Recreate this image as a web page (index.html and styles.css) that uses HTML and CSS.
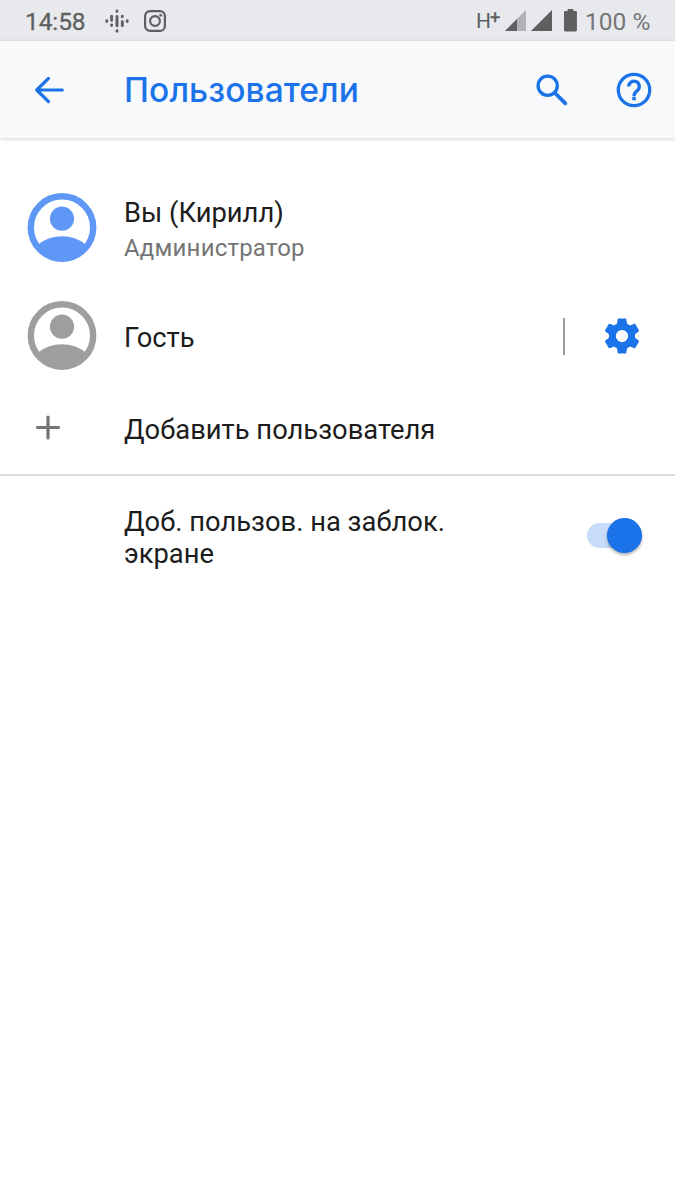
FILE: index.html
```html
<!DOCTYPE html>
<html lang="ru">
<head>
<meta charset="utf-8">
<title>Пользователи</title>
<link rel="stylesheet" href="styles.css">
</head>
<body>
<div class="status">
  <span class="clock">14:58</span>
  <svg class="podcast" width="26" height="26" viewBox="0 0 26 26" fill="none" stroke="#5e5f61" stroke-width="2.9" stroke-linecap="round"><path d="M2.8 12.7v.8M7.6 8.2v4.2M7.6 17v.6M13 2.900v.5M13 8.400v9.400M13 22.800v.5M18.300 8.200v.6M18.300 13.600v4.200M23.200 12.700v.8"/></svg>
  <svg class="insta" width="22" height="22" viewBox="0 0 22 22" fill="none" stroke="#5e5f61" stroke-width="2.2"><rect x="1.100" y="1.100" width="19.800" height="19.800" rx="5"/><circle cx="11" cy="11" r="4.900"/><circle cx="16.700" cy="5.300" r="1.400" fill="#5e5f61" stroke="none"/></svg>
  <span class="spacer"></span>
  <span class="net">H<span class="net-plus">+</span></span>
  <svg class="signal" width="22" height="22" viewBox="0 0 22 22"><path fill="#b1b2b5" d="M21 0v21H0z"/><path fill="#5e5f61" d="M12 9v12H0z"/></svg>
  <svg class="signal second" width="22" height="22" viewBox="0 0 22 22"><path fill="#5e5f61" d="M21 0v21H0z"/></svg>
  <svg class="battery" width="13" height="23" viewBox="0 0 13 23"><path fill="#5e5f61" d="M3.600 0h5.800v2.100h2.200c.8 0 1.300.5 1.300 1.300v17.700c0 .8-.5 1.300-1.300 1.300H1.300C.5 22.400 0 21.900 0 21.100V3.400c0-.8.5-1.300 1.300-1.300h2.300z"/></svg>
  <span class="percent">100 %</span>
</div>
<header class="bar">
  <svg class="back" width="32" height="30" viewBox="0 0 32 30" fill="none" stroke="#1a73e8" stroke-width="3.200" stroke-linecap="round" stroke-linejoin="round"><path d="M29.300 15H4M15.500 3.400L3.700 15l11.800 11.600"/></svg>
  <h1 class="title">Пользователи</h1>
  <svg class="search" width="34" height="34" viewBox="0 0 34 34" fill="none" stroke="#1a73e8" stroke-width="3.300" stroke-linecap="round"><circle cx="12.700" cy="12.700" r="9.600"/><path d="M20.500 20.500l9.800 9.800" stroke-width="3.800"/></svg>
  <svg class="help" width="36" height="36" viewBox="0 0 36 36" fill="none" stroke="#1a73e8" stroke-width="3.300"><circle cx="18" cy="18" r="15.700"/><path d="M12.700 14.400a5.300 5.300 0 1 1 9.100 3.700C19.800 20 18 20.600 18 24.200"/><path d="M16.300 26.600h3.500" stroke-width="3.400"/></svg>
</header>
<main>
  <section class="row user">
    <svg class="avatar you" width="70" height="70" viewBox="0 0 70 70"><circle cx="35" cy="34.500" r="31.200" fill="#fff" stroke="currentColor" stroke-width="6.400"/><circle cx="35" cy="25.700" r="12.100" fill="currentColor"/><path fill="currentColor" d="M12 51C18 46 26 43.200 35 43.200S52 46 58 51A29 29 0 0 1 35 66.500A29 29 0 0 1 12 51z"/></svg>
    <div class="labels"><div class="name">Вы (Кирилл)</div><div class="role">Администратор</div></div>
  </section>
  <section class="row guest">
    <svg class="avatar" width="70" height="70" viewBox="0 0 70 70"><circle cx="35" cy="34.500" r="31.200" fill="#fff" stroke="currentColor" stroke-width="6.400"/><circle cx="35" cy="25.700" r="12.100" fill="currentColor"/><path fill="currentColor" d="M12 51C18 46 26 43.200 35 43.200S52 46 58 51A29 29 0 0 1 35 66.500A29 29 0 0 1 12 51z"/></svg>
    <div class="name guest-name">Гость</div>
    <span class="separator"></span>
    <svg class="gear" width="42" height="42" viewBox="0 0 24 24"><path fill="#1a73e8" d="M19.430 12.980c.04-.32.07-.64.07-.98s-.03-.66-.07-.98l2.110-1.650c.19-.15.24-.42.12-.64l-2-3.460c-.12-.22-.39-.3-.61-.22l-2.490 1c-.52-.4-1.080-.73-1.690-.98l-.38-2.650C14.460 2.180 14.250 2 14 2h-4c-.25 0-.46.18-.49.42l-.38 2.650c-.61.25-1.170.59-1.690.98l-2.490-1c-.23-.09-.49 0-.61.22l-2 3.460c-.13.22-.07.49.12.64l2.110 1.650c-.04.32-.07.65-.07.98s.03.66.07.98l-2.110 1.650c-.19.15-.24.42-.12.64l2 3.460c.12.22.39.3.61.22l2.490-1c.52.4 1.080.73 1.690.98l.38 2.650c.03.24.24.42.49.42h4c.25 0 .46-.18.49-.42l.38-2.650c.61-.25 1.170-.59 1.690-.98l2.490 1c.23.09.49 0 .61-.22l2-3.460c.12-.22.07-.49-.12-.64z"/><circle cx="12" cy="12" r="3.500" fill="#fff"/></svg>
  </section>
  <section class="row add">
    <svg class="plus" width="26" height="26" viewBox="0 0 26 26" stroke="#757575" stroke-width="3.200" stroke-linecap="round"><path d="M13 2v21M2.500 12.500h21"/></svg>
    <div class="name">Добавить пользователя</div>
  </section>
  <section class="row lock">
    <div class="name">Доб. пользов. на заблок. экране</div>
    <div class="switch"><span class="knob"></span></div>
  </section>
</main>
</body>
</html>
```
FILE: styles.css
```css
* { box-sizing: border-box; }
body {
  margin: 0;
  width: 675px;
  height: 1200px;
  overflow: hidden;
  background: #fff;
  font-family: Roboto, "Liberation Sans", sans-serif;
  color: #1c1c1c;
}
svg { display: block; flex: none; }
.status {
  height: 41px;
  background: #e8e9ec;
  display: flex;
  align-items: center;
  padding: 0 25px 0 25px;
  color: #5e5f61;
  white-space: nowrap;
}
.clock { width: 78px; padding-top: 2px; font-size: 24.500px; letter-spacing: -.1px; -webkit-text-stroke: .3px; }
.podcast { margin-left: .5px; }
.insta { margin-left: 14.500px; }
.spacer { flex: 1; }
.net { display: flex; font-size: 21px; line-height: 26px; width: 29px; }
.net-plus { font-size: 18px; line-height: 20px; margin-left: -1px; -webkit-text-stroke: .5px; }
.signal { margin-top: 1px; }
.second { margin-left: 4px; }
.battery { margin-left: 11px; }
.percent { color: #757678; width: 65px; margin-left: 8px; padding-top: 2px; font-size: 24.500px; }
.bar {
  position: relative;
  height: 97px;
  background: #f8f9fb;
  display: flex;
  align-items: center;
  padding: 0 23px 0 33px;
  box-shadow: 0 1px 4px rgba(0,0,0,.18);
}
.title {
  margin: 0 0 0 59px;
  flex: 1;
  font: 500 33.500px/42px Inter, Roboto, sans-serif;
  letter-spacing: .1px;
  color: #1a73e8;
}
.help { margin-left: 47px; }
.row { display: flex; padding-left: 27px; }
.user { margin-top: 36px; height: 108px; align-items: center; }
.avatar { color: #9e9e9e; }
.you { color: #5e97f6; }
.labels { margin: 3px 0 0 27px; }
.name { font-size: 27.350px; line-height: 32.500px; }
.role { font-size: 24px; line-height: 28px; margin-top: 4px; letter-spacing: .2px; color: #757575; }
.guest { height: 108px; align-items: center; padding-right: 32px; }
.guest-name { margin: 4px 0 0 27px; flex: 1; }
.separator { width: 2px; height: 37px; background: #9e9e9e; }
.gear { margin-left: 36px; }
.add { height: 85.500px; padding: 25px 0 0 35px; border-bottom: 2px solid #dcdcdc; }
.add .name { margin-left: 63px; margin-top: -1px; }
.lock { padding: 30px 33px 0 124px; justify-content: space-between; }
.lock .name { width: 340px; }
.switch { margin-top: 17.500px; width: 55px; height: 25px; border-radius: 13px; background: #c6dcf9; }
.knob {
  display: block;
  width: 35px;
  height: 35px;
  margin: -5px 0 0 20px;
  border-radius: 50%;
  background: #1a73e8;
  box-shadow: 0 2px 3px rgba(0,0,0,.3);
}
```
